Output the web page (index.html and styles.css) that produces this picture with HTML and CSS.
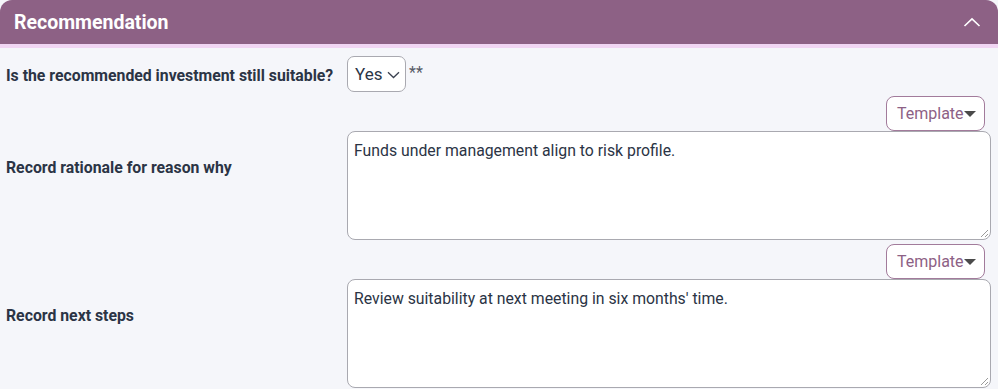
FILE: index.html
```html
<!DOCTYPE html>
<html>
<head>
<meta charset="utf-8">
<link rel="stylesheet" href="styles.css">
</head>
<body>
<section class="panel">
  <header class="panel-head">
    <h2 class="panel-title">Recommendation</h2>
    <svg class="collapse" width="18" height="10" viewBox="0 0 18 10"><path d="M1.5 9 L9 1.8 L16.5 9" fill="none" stroke="#fff" stroke-width="1.6"/></svg>
  </header>
  <div class="panel-body">
    <div class="row row-select">
      <div class="label">Is the recommended investment still suitable?</div>
      <div class="control inline">
        <div class="select">Yes<svg class="sel-chev" width="13" height="8" viewBox="0 0 13 8"><path d="M1 1.2 L6.5 6.5 L12 1.2" fill="none" stroke="#3a4150" stroke-width="1.3"/></svg></div>
        <span class="req">**</span>
      </div>
    </div>
    <div class="row">
      <div class="label">Record rationale for reason why</div>
      <div class="control stack">
        <button class="tpl">Template<span class="tri"></span></button>
        <div class="textarea">Funds under management align to risk profile.<span class="grip"></span></div>
      </div>
    </div>
    <div class="row">
      <div class="label">Record next steps</div>
      <div class="control stack">
        <button class="tpl">Template<span class="tri"></span></button>
        <div class="textarea">Review suitability at next meeting in six months' time.<span class="grip"></span></div>
      </div>
    </div>
  </div>
</section>
</body>
</html>
```
FILE: styles.css
```css
* { box-sizing: border-box; }
html, body { margin: 0; padding: 0; }
body {
  background: #f5f6fa;
  font-family: Roboto, "Liberation Sans", sans-serif;
  color: #2b3445;
  width: 998px;
  height: 389px;
  overflow: hidden;
}
.panel { width: 998px; }
.panel-head {
  height: 48px;
  background: #8d6185;
  border-bottom: 4px solid #f1d5f3;
  border-radius: 12px 12px 0 0;
  display: flex;
  align-items: center;
  justify-content: space-between;
  padding: 0 17px 0 14px;
}
.panel-title {
  margin: 0;
  color: #fff;
  font-size: 19.5px;
  font-weight: 700;
}
.collapse { display: block; margin-top: 0; }
.panel-body { padding: 0 7px 0 6px; }
.row {
  display: flex;
  align-items: center;
}
.row-select { padding-top: 8px; }
.label {
  width: 341px;
  flex: none;
  font-size: 15.8px;
  font-weight: 700;
  color: #2b3445;
  padding-top: 3px;
}
.control { flex: 1; }
.inline { display: flex; align-items: center; }
.select {
  width: 59px;
  height: 36px;
  background: #fff;
  border: 1px solid #a9a9b0;
  border-radius: 7px;
  display: flex;
  align-items: center;
  padding-left: 7px;
  font-size: 17px;
  color: #2b3445;
}
.sel-chev { margin-left: 5px; margin-top: 1px; }
.req { margin-left: 3px; font-size: 16px; color: #555b66; margin-top: -3px; }
.stack {
  display: flex;
  flex-direction: column;
  align-items: flex-end;
}
.tpl {
  margin-top: 4px;
  margin-right: 6px;
  width: 99px;
  height: 35px;
  background: #fff;
  border: 1px solid #a27b9b;
  border-radius: 8px;
  font-family: inherit;
  font-size: 16px;
  color: #8d6185;
  padding: 0 0 0 10px;
  display: flex;
  align-items: center;
}
.tri {
  width: 0; height: 0;
  border-left: 6px solid transparent;
  border-right: 6px solid transparent;
  border-top: 6px solid #4a4a4a;
  margin-top: 1px;
}
.textarea {
  position: relative;
  align-self: stretch;
  height: 109px;
  background: #fff;
  border: 1px solid #a9a9b0;
  border-radius: 8px;
  padding: 9px 6px;
  font-size: 15.8px;
  line-height: 19px;
  color: #2b3445;
}
.grip {
  position: absolute;
  right: 2px; bottom: 2px;
  width: 7px; height: 7px;
  background: linear-gradient(135deg, transparent 45%, #9a9a9a 45%, #9a9a9a 55%, transparent 55%, transparent 75%, #9a9a9a 75%, #9a9a9a 85%, transparent 85%);
}
```
